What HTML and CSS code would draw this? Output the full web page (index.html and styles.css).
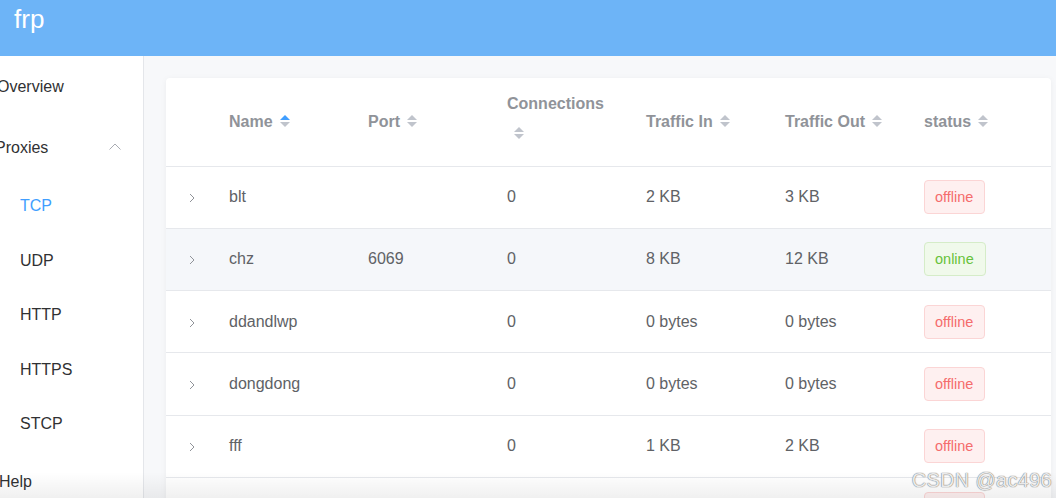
FILE: index.html
```html
<!DOCTYPE html>
<html>
<head>
<meta charset="utf-8">
<link rel="stylesheet" href="styles.css">
</head>
<body>
<div class="app">
  <header class="topbar"><span class="brand">frp</span></header>
  <div class="layout">
    <nav class="sidebar">
      <div class="nav-item nav-overview">Overview</div>
      <div class="nav-item nav-proxies">
        <span>Proxies</span>
        <svg class="chev-up" width="12" height="7" viewBox="0 0 12 7"><polyline points="0.5,6.5 6,1 11.5,6.5" fill="none" stroke="#a8abb2" stroke-width="1"/></svg>
      </div>
      <div class="sub-item active">TCP</div>
      <div class="sub-item">UDP</div>
      <div class="sub-item">HTTP</div>
      <div class="sub-item">HTTPS</div>
      <div class="sub-item">STCP</div>
      <div class="nav-item nav-help">Help</div>
    </nav>
    <main class="main">
      <div class="card">
        <table class="proxy-table">
          <colgroup>
            <col class="c-exp"><col class="c-col"><col class="c-col"><col class="c-col"><col class="c-col"><col class="c-col"><col class="c-last">
          </colgroup>
          <thead>
            <tr>
              <th></th>
              <th><span class="th-text">Name</span><span class="caret"><i class="up on"></i><i class="down"></i></span></th>
              <th><span class="th-text">Port</span><span class="caret"><i class="up"></i><i class="down"></i></span></th>
              <th><span class="th-text">Connections</span><span class="caret"><i class="up"></i><i class="down"></i></span></th>
              <th><span class="th-text">Traffic In</span><span class="caret"><i class="up"></i><i class="down"></i></span></th>
              <th><span class="th-text">Traffic Out</span><span class="caret"><i class="up"></i><i class="down"></i></span></th>
              <th><span class="th-text">status</span><span class="caret"><i class="up"></i><i class="down"></i></span></th>
            </tr>
          </thead>
          <tbody>
            <tr>
              <td class="exp"><svg width="6" height="10" viewBox="0 0 6 10"><polyline points="1,1 5,5 1,9" fill="none" stroke="#909399" stroke-width="1"/></svg></td>
              <td>blt</td><td></td><td>0</td><td>2 KB</td><td>3 KB</td>
              <td><span class="tag off">offline</span></td>
            </tr>
            <tr class="hover">
              <td class="exp"><svg width="6" height="10" viewBox="0 0 6 10"><polyline points="1,1 5,5 1,9" fill="none" stroke="#909399" stroke-width="1"/></svg></td>
              <td>chz</td><td>6069</td><td>0</td><td>8 KB</td><td>12 KB</td>
              <td><span class="tag on">online</span></td>
            </tr>
            <tr>
              <td class="exp"><svg width="6" height="10" viewBox="0 0 6 10"><polyline points="1,1 5,5 1,9" fill="none" stroke="#909399" stroke-width="1"/></svg></td>
              <td>ddandlwp</td><td></td><td>0</td><td>0 bytes</td><td>0 bytes</td>
              <td><span class="tag off">offline</span></td>
            </tr>
            <tr>
              <td class="exp"><svg width="6" height="10" viewBox="0 0 6 10"><polyline points="1,1 5,5 1,9" fill="none" stroke="#909399" stroke-width="1"/></svg></td>
              <td>dongdong</td><td></td><td>0</td><td>0 bytes</td><td>0 bytes</td>
              <td><span class="tag off">offline</span></td>
            </tr>
            <tr>
              <td class="exp"><svg width="6" height="10" viewBox="0 0 6 10"><polyline points="1,1 5,5 1,9" fill="none" stroke="#909399" stroke-width="1"/></svg></td>
              <td>fff</td><td></td><td>0</td><td>1 KB</td><td>2 KB</td>
              <td><span class="tag off">offline</span></td>
            </tr>
            <tr>
              <td class="exp"></td>
              <td></td><td></td><td></td><td></td><td></td>
              <td><span class="tag off">offline</span></td>
            </tr>
          </tbody>
        </table>
      </div>
    </main>
  </div>
  <div class="bottom-fade"></div>
  <div class="watermark">CSDN @ac496</div>
</div>
</body>
</html>
```
FILE: styles.css
```css
* { box-sizing: border-box; }
html, body {
  margin: 0;
  padding: 0;
  width: 1056px;
  height: 498px;
  overflow: hidden;
  font-family: "Liberation Sans", Arial, sans-serif;
  background: #fff;
}
.app {
  position: relative;
  width: 1056px;
  height: 498px;
  overflow: hidden;
}
.topbar {
  height: 56px;
  background: #6db4f7;
  padding-left: 14px;
}
.brand {
  display: block;
  color: #fff;
  font-size: 26px;
  line-height: 39px;
}
.layout {
  display: flex;
  height: 442px;
}
.sidebar {
  width: 144px;
  flex: none;
  border-right: 1px solid #e4e6ea;
  background: #fff;
  display: flex;
  flex-direction: column;
  padding-top: 3px;
  color: #303133;
  font-size: 16px;
  overflow: hidden;
}
.nav-item {
  flex: none;
  height: 56px;
  display: flex;
  align-items: center;
  margin-left: -3px;
}
.nav-proxies {
  margin-top: 5px;
  margin-bottom: 3px;
  margin-left: -5px;
  justify-content: space-between;
  padding-right: 22px;
}
.chev-up { margin-top: -4px; }
.sub-item {
  height: 54.5px;
  display: flex;
  align-items: center;
  padding-left: 20px;
  flex: none;
}
.sub-item.active { color: #409eff; }
.nav-help {
  margin-top: 3px;
  height: 54px;
  margin-left: -1px;
}
.main {
  flex: 1;
  background: #f7f8fa;
  padding: 22px 5px 0 22px;
  overflow: hidden;
}
.card {
  background: #fff;
  border-radius: 4px;
  box-shadow: 0 1px 6px rgba(0, 0, 0, 0.05);
  height: 600px;
}
.proxy-table {
  border-collapse: collapse;
  table-layout: fixed;
  width: 885px;
}
.c-exp { width: 51px; }
.c-col { width: 139px; }
.c-last { width: 139px; }
th {
  height: 88px;
  padding: 0 12px 2px;
  text-align: left;
  color: #909399;
  font-weight: bold;
  font-size: 16px;
  line-height: 23px;
  border-bottom: 1px solid #e6e8ec;
  vertical-align: middle;
}
.th-text { vertical-align: middle; }
.caret {
  display: inline-flex;
  flex-direction: column;
  align-items: center;
  justify-content: center;
  gap: 2px;
  width: 24px;
  height: 36px;
  vertical-align: middle;
}
.caret i {
  display: block;
  width: 0;
  height: 0;
  border-left: 5px solid transparent;
  border-right: 5px solid transparent;
}
.caret .up { border-bottom: 5px solid #c0c4cc; }
.caret .up.on { border-bottom-color: #409eff; }
.caret .down { border-top: 5px solid #c0c4cc; }
td {
  height: 62.3px;
  padding: 0 12px;
  color: #606266;
  font-size: 16px;
  border-bottom: 1px solid #e6e8ec;
  vertical-align: middle;
}
td.exp {
  text-align: center;
  padding: 0 0 0 1px;
}
td.exp svg { display: inline-block; vertical-align: middle; }
tr.hover td { background: #f5f7fa; }
.tag {
  display: inline-flex;
  align-items: center;
  height: 34px;
  padding: 0 11px 0 10px;
  border-radius: 4px;
  font-size: 14.5px;
  border: 1px solid;
}
.tag.off {
  background: #fef0f0;
  border-color: #fbd5d5;
  color: #f56c6c;
}
.tag.on {
  background: #f0f9eb;
  border-color: #d5ecc8;
  color: #67c23a;
}
.bottom-fade {
  position: absolute;
  left: 0;
  right: 0;
  bottom: 0;
  height: 26px;
  background: linear-gradient(to bottom, rgba(0, 0, 0, 0), rgba(0, 0, 0, 0.06));
  pointer-events: none;
}
.watermark {
  position: absolute;
  right: 4px;
  bottom: 6px;
  font-size: 20px;
  color: rgba(255, 255, 255, 0.85);
  text-shadow: 0 0 1px #777, 0 0 1px #777;
  letter-spacing: 0.3px;
}
```
